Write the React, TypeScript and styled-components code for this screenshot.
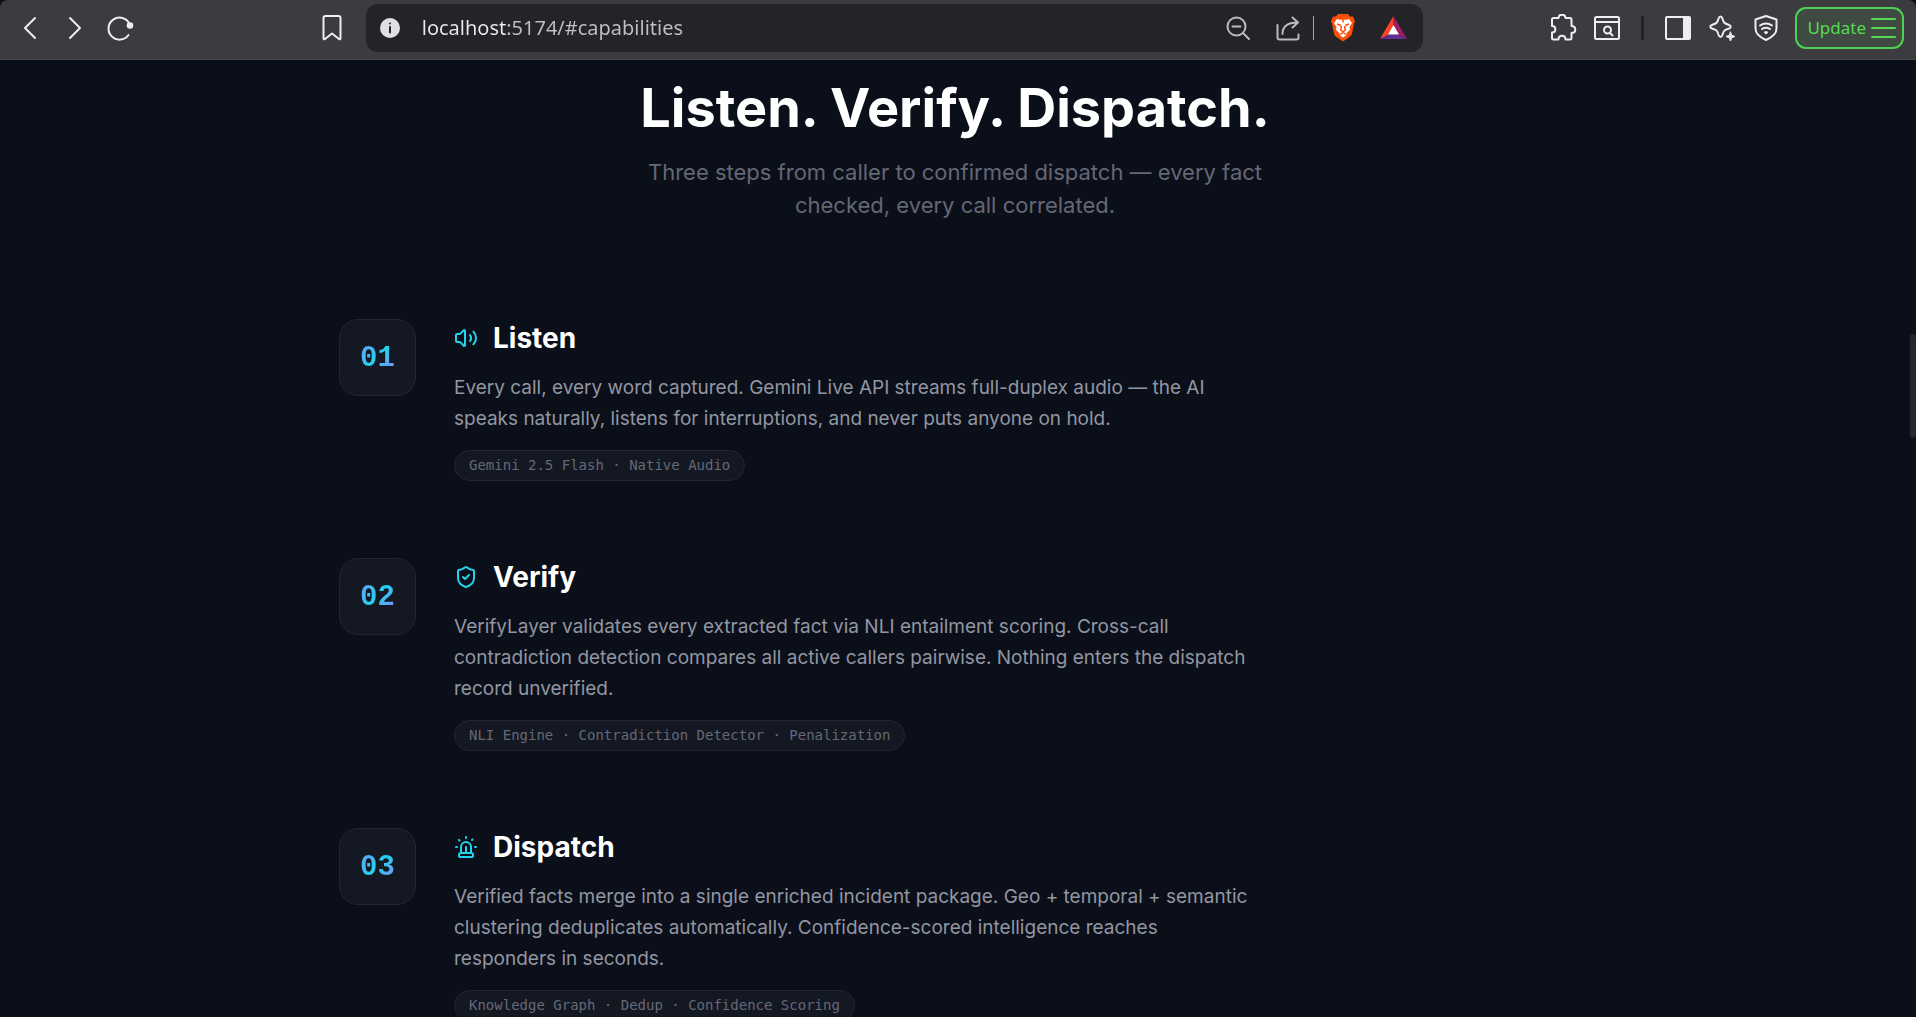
import React from "react";
import styled, { createGlobalStyle } from "styled-components";
import { Volume2, ShieldCheck, Siren, LucideIcon } from "lucide-react";

const Global = createGlobalStyle`
  *, *::before, *::after { box-sizing: border-box; }
  html, body, #root { height: 100%; }
  body { margin: 0; overflow: hidden; background: #0b0f19; font-family: Inter, "Liberation Sans", sans-serif; }
  h1, h2, p { margin: 0; }
`;

const Browser = styled.div`
  display: flex;
  flex-direction: column;
  height: 100%;
`;

const Toolbar = styled.header`
  display: flex;
  align-items: center;
  flex: none;
  height: 60px;
  padding: 4px 12px 7px 10px;
  background: #3c3b3f;
  border-bottom: 1px solid #47464a;
  border-radius: 8px 8px 0 0;
`;

const NavGroup = styled.nav`
  display: flex;
  gap: 5px;
  flex: 17 1 0;
`;

const IconButton = styled.button<{ $wide?: boolean }>`
  display: grid;
  place-items: center;
  flex: none;
  width: ${(p) => (p.$wide ? 50 : 40)}px;
  height: 40px;
  padding: 0;
  border: 0;
  background: none;
  color: ${(p) => (p.$wide ? "#bbbac0" : "#eeeef2")};
`;

const BookmarkButton = styled(IconButton)`
  margin: 0 14px 0 auto;
`;

const AddressBar = styled.form`
  display: flex;
  align-items: center;
  flex: 0 1 1057px;
  height: 48px;
  padding: 0 5px 0 4px;
  border-radius: 12px;
  background: #242328;
`;

const AddressInput = styled.input`
  flex: 1;
  min-width: 0;
  padding: 0 0 0 12px;
  border: 0;
  outline: 0;
  color: transparent;
  background: linear-gradient(90deg, #ececf0 96px, #c0c0c6 96px);
  background-clip: text;
  font: 20px/30px "Noto Sans", "Open Sans", sans-serif;
`;

const AddressDivider = styled.span`
  width: 1px;
  height: 24px;
  margin-right: 4px;
  background: #a5a4aa;
`;

const ToolDivider = styled.span`
  width: 3px;
  height: 24px;
  margin: 0 10px;
  border-radius: 1px;
  background: #222126;
`;

const ActionGroup = styled.div`
  display: flex;
  align-items: center;
  justify-content: flex-end;
  gap: 4px;
  flex: 23 1 0;
`;

const UpdateButton = styled.button`
  display: flex;
  align-items: center;
  gap: 5px;
  height: 42px;
  margin-left: 5px;
  padding: 0 6px 0 10px;
  border: 2px solid #4fd150;
  border-radius: 11px;
  background: #3f4a42;
  color: #56d955;
  font: 17px/24px "Noto Sans", "Open Sans", sans-serif;
`;

const Page = styled.main`
  flex: 1;
  min-height: 0;
  overflow: hidden;
  display: flex;
  align-items: flex-start;
  background: #0b0f19;
`;

const Section = styled.section`
  flex: 1;
  padding: 16px 24px 0;
`;

const Container = styled.div`
  max-width: 1232px;
  margin: 0 auto;
`;

const Intro = styled.header`
  display: flex;
  flex-direction: column;
  align-items: center;
  gap: 16px;
  margin-bottom: 97px;
  text-align: center;
`;

const Title = styled.h1`
  color: #fff;
  font: 700 54px/64px Inter, "Liberation Sans", sans-serif;
`;

const Lead = styled.p`
  max-width: 640px;
  color: #646775;
  font-size: 22px;
  line-height: 33px;
`;

const Steps = styled.ol`
  display: flex;
  flex-direction: column;
  gap: 77px;
  margin: 0;
  padding: 0;
  list-style: none;
`;

const StepRow = styled.li`
  display: flex;
  align-items: flex-start;
  gap: 38px;
`;

const NumberTile = styled.div`
  display: grid;
  place-items: center;
  flex: none;
  width: 77px;
  height: 77px;
  border: 1px solid #232631;
  border-radius: 19px;
  background: #141823;
`;

const NumberText = styled.span`
  padding-top: 2px;
  font: 700 29px/38px "Liberation Mono", monospace;
  color: transparent;
  background: linear-gradient(135deg, #60a5fa 15%, #22d3ee 50%, #818cf8 85%);
  background-clip: text;
`;

const StepBody = styled.div`
  display: flex;
  flex-direction: column;
  align-items: flex-start;
  max-width: 806px;
`;

const StepHeading = styled.h2`
  display: flex;
  align-items: center;
  gap: 15px;
  margin-bottom: 15px;
  color: #fff;
  font-size: 28px;
  line-height: 38px;
  svg { color: #22d3ee; }
`;

const StepText = styled.p`
  margin-bottom: 16px;
  color: #9296a2;
  font-size: 19px;
  line-height: 31px;
`;

const Tag = styled.span`
  padding: 0 14px;
  border: 1px solid #232631;
  border-radius: 16px;
  background: #141823;
  color: #656876;
  font: 14px/29px "DejaVu Sans Mono", monospace;
`;

const ScrollThumb = styled.div`
  flex: none;
  width: 6px;
  height: 104px;
  margin-top: 274px;
  border-radius: 3px;
  background: #25272f;
`;

type Step = { number: string; title: string; icon: LucideIcon; text: string; tag: string };

const steps: Step[] = [
  {
    number: "01",
    title: "Listen",
    icon: Volume2,
    text: "Every call, every word captured. Gemini Live API streams full-duplex audio — the AI speaks naturally, listens for interruptions, and never puts anyone on hold.",
    tag: "Gemini 2.5 Flash · Native Audio",
  },
  {
    number: "02",
    title: "Verify",
    icon: ShieldCheck,
    text: "VerifyLayer validates every extracted fact via NLI entailment scoring. Cross-call contradiction detection compares all active callers pairwise. Nothing enters the dispatch record unverified.",
    tag: "NLI Engine · Contradiction Detector · Penalization",
  },
  {
    number: "03",
    title: "Dispatch",
    icon: Siren,
    text: "Verified facts merge into a single enriched incident package. Geo + temporal + semantic clustering deduplicates automatically. Confidence-scored intelligence reaches responders in seconds.",
    tag: "Knowledge Graph · Dedup · Confidence Scoring",
  },
];

const Glyph = ({ children }: { children: React.ReactNode }) => (
  <svg width={28} height={28} viewBox="0 0 28 28" fill="none" stroke="currentColor" strokeWidth={2} strokeLinecap="round" strokeLinejoin="round" aria-hidden="true">
    {children}
  </svg>
);

const BraveLion = () => (
  <svg width={28} height={28} viewBox="0 0 28 28" aria-hidden="true">
    <path fill="#fb4f0a" d="M9 0h10l2 2.500h3l2 5-1 2-2 10q-.5 2-2.500 3.500L14 27.500 7.500 23Q5.500 21.500 5 19.500L3 9.500 2 7.500l2-5h3z" />
    <path fill="#fff" d="M8 5l3 .8h6L20 5l3 4-2.500 4 .5 3-3 2.500-1 3-3 2-3-2-1-3-3-2.500.5-3L5 9z" />
    <path fill="none" stroke="#fb4f0a" strokeWidth="1.500" d="M8 10l4 1.500M20 10l-4 1.500M12.500 12l-.8 4 2.300 1.800 2.300-1.800-.8-4M11 20.500l3-2 3 2M14 5.500v3" />
  </svg>
);

const BatTriangle = () => (
  <svg width={28} height={28} viewBox="0 0 28 28" aria-hidden="true">
    <path fill="#ff4724" d="M14.500 2v9L9.500 20.500 1 25z" />
    <path fill="#9e1f63" d="M14.500 2 28 25l-8.500-4.500-5-9.500z" />
    <path fill="#662d91" d="M1 25l8.500-4.500h10L28 25z" />
    <path fill="#fff" d="M14.500 11l5.500 9.500H9z" />
  </svg>
);

export default function App() {
  return (
    <>
      <Global />
      <Browser>
        <Toolbar>
          <NavGroup aria-label="Navigation">
            <IconButton aria-label="Back"><Glyph><path d="M19 4 9 14l10 10" /></Glyph></IconButton>
            <IconButton aria-label="Forward"><Glyph><path d="M9 4l10 10L9 24" /></Glyph></IconButton>
            <IconButton aria-label="Reload"><Glyph><path d="M23.500 10A11 11 0 1 0 22.500 21" /><circle cx="24" cy="11.500" r="2.300" fill="currentColor" /></Glyph></IconButton>
            <BookmarkButton aria-label="Bookmark"><Glyph><path d="M5.500 4q0-2 2-2h13q2 0 2 2v20q0 2-1.500 1l-7-5.500-7 5.500q-1.500 1-1.500-1z" /></Glyph></BookmarkButton>
          </NavGroup>
          <AddressBar>
            <IconButton type="button" aria-label="Site information">
              <Glyph><circle cx="14" cy="14" r="9" fill="#dfdfe5" stroke="#dfdfe5" /><path d="M14 13v5.500M14 9.500v.1" stroke="#242328" /></Glyph>
            </IconButton>
            <AddressInput aria-label="Address" defaultValue="localhost:5174/#capabilities" />
            <IconButton $wide type="button" aria-label="Zoom out"><Glyph><circle cx="12.500" cy="12.500" r="9" /><path d="M19 19l6 6M8.500 12.500h8" /></Glyph></IconButton>
            <IconButton $wide type="button" aria-label="Share"><Glyph><path d="M3.500 11v12.500q0 2 2 2h17q2 0 2-2v-3M8.500 20q0-11.500 15-11.500M18.500 3.500l5.500 5-5.500 5" /></Glyph></IconButton>
            <AddressDivider />
            <IconButton $wide type="button" aria-label="Brave Shields"><BraveLion /></IconButton>
            <IconButton $wide type="button" aria-label="Rewards"><BatTriangle /></IconButton>
          </AddressBar>
          <ActionGroup>
            <IconButton aria-label="Extensions">
              <Glyph><path d="M4.500 4h5c0-4.500 7-4.500 7 0h4.500q1.500 0 1.500 1.500V12c5 0 5 7 0 7v5q0 1.500-1.500 1.500h-4.500c0-5-7-5-7 0h-5Q3 25.500 3 24v-5.500c4.500 0 4.500-6.500 0-6.500V5.500Q3 4 4.500 4z" /></Glyph>
            </IconButton>
            <IconButton aria-label="Search tabs">
              <Glyph><rect x="2" y="3" width="24" height="22" rx="1.500" /><path d="M2 8h24M17 19l2.500 2.500" /><circle cx="14.500" cy="16" r="3.500" /></Glyph>
            </IconButton>
            <ToolDivider />
            <IconButton aria-label="Side panel">
              <Glyph><rect x="2" y="3" width="24" height="22" rx="1" /><path d="M20 4h5v20h-5z" fill="currentColor" /></Glyph>
            </IconButton>
            <IconButton aria-label="Leo assistant">
              <Glyph>
                <path d="M12.500 2.500c1 0 1.500.6 2 2.200 1.200 4 2 4.800 6 6 3 .9 3 3 0 4-4 1.200-4.800 2-6 6-.9 3-3 3-4 0-1.200-4-2-4.800-6-6-3-.9-3-3 0-4 4-1.200 4.800-2 6-6 .5-1.600 1-2.200 2-2.200z" />
                <path d="M22.500 18l1.300 3.200L27 22.500l-3.200 1.300-1.300 3.200-1.300-3.200-3.200-1.300 3.200-1.300z" fill="currentColor" strokeWidth="1" />
              </Glyph>
            </IconButton>
            <IconButton aria-label="VPN">
              <Glyph><path d="M14 2l10.500 3.500v9q0 7-10.500 11.500Q3.500 21.500 3.500 14.500v-9zM8 11.500q6-4 12 0M10 15q4-2.500 8 0" /><path d="M13 18.300q1-.5 2 0l-1 1z" fill="currentColor" /></Glyph>
            </IconButton>
            <UpdateButton>
              Update
              <svg width="25" height="20" viewBox="0 0 25 20" stroke="currentColor" strokeWidth="2" strokeLinecap="round" aria-hidden="true">
                <path d="M1 1h23M1 10h23M1 19h23" />
              </svg>
            </UpdateButton>
          </ActionGroup>
        </Toolbar>
        <Page>
          <Section>
            <Container>
              <Intro>
                <Title>Listen. Verify. Dispatch.</Title>
                <Lead>Three steps from caller to confirmed dispatch — every fact checked, every call correlated.</Lead>
              </Intro>
              <Steps>
                {steps.map(({ number, title, icon: Icon, text, tag }) => (
                  <StepRow key={number}>
                    <NumberTile><NumberText>{number}</NumberText></NumberTile>
                    <StepBody>
                      <StepHeading><Icon size={24} strokeWidth={2} aria-hidden="true" />{title}</StepHeading>
                      <StepText>{text}</StepText>
                      <Tag>{tag}</Tag>
                    </StepBody>
                  </StepRow>
                ))}
              </Steps>
            </Container>
          </Section>
          <ScrollThumb />
        </Page>
      </Browser>
    </>
  );
}
